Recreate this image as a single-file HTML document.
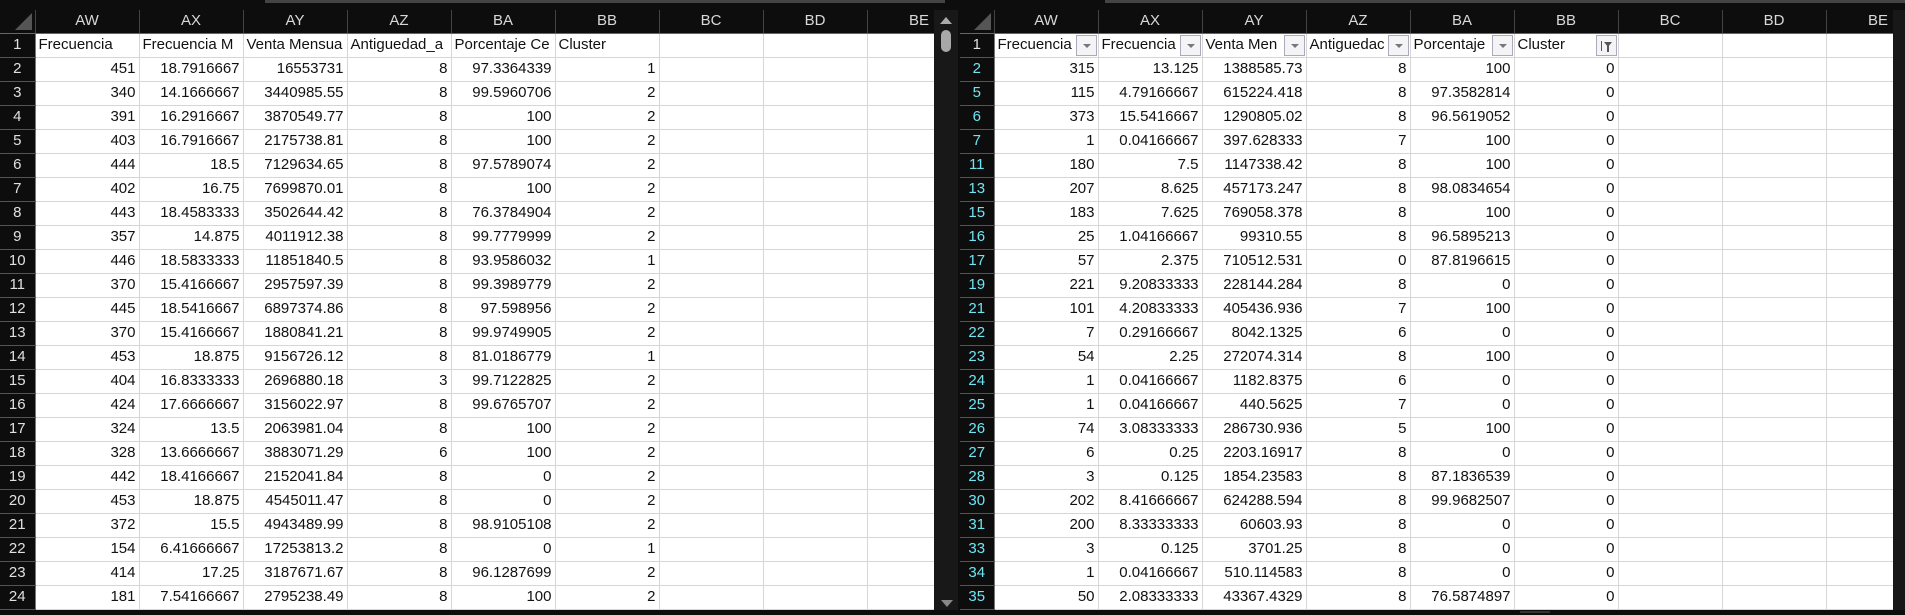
<!DOCTYPE html>
<html><head><meta charset="utf-8"><style>
*{margin:0;padding:0;box-sizing:border-box}
body{width:1905px;height:615px;background:#0d0d0d;overflow:hidden;position:relative;font-family:"Liberation Sans",sans-serif;font-size:15px}
.pane{position:absolute;top:10px;overflow:hidden;height:600px}
table{border-collapse:collapse;table-layout:fixed}
td{height:24px;border:1px solid #d6d6d6;background:#fff;color:#111;white-space:nowrap;overflow:hidden;padding:0 3px;text-align:right;line-height:22px}
td.t{text-align:left}
tr.h td{height:23px;background:#0d0d0d;color:#d8d8d8;text-align:center;border:none;border-right:1px solid #444;border-bottom:1px solid #666;font-size:15px}
td.r{background:#0d0d0d;color:#e0e0e0;text-align:center;border:none;border-bottom:1px solid #555;border-right:1px solid #777}
.f td.r{color:#6fe4f2}
td.corner{background:#0d0d0d;border:none;border-right:1px solid #777;border-bottom:1px solid #777;position:relative}
td.corner:after{content:"";position:absolute;right:3px;bottom:3px;border-left:17px solid transparent;border-bottom:17px solid #555}
.fb{position:relative;padding-right:26px}
.fb i{position:absolute;right:1px;top:1px;width:21px;height:21px;border:1px solid #aab;background:#f4f4f6}
.fb i:after{content:"";position:absolute;left:6px;top:8px;border-left:4px solid transparent;border-right:4px solid transparent;border-top:4px solid #777}
.fb i.fl:after{left:7px;top:6px;border-left:4px solid transparent;border-right:4px solid transparent;border-top:5px solid #555}
.fb i.fl:before{content:"";position:absolute;left:10px;top:10px;width:2px;height:6px;background:#555}
.fb i.fl b{position:absolute;left:4px;top:5px;width:1px;height:10px;background:#555}
.sb{position:absolute;background:#181818}
</style></head><body>
<div style="position:absolute;left:265px;top:0;width:680px;height:3px;background:#444"></div>
<div style="position:absolute;left:1105px;top:0;width:800px;height:3px;background:#444"></div>

<div class="pane" style="left:0;width:934px">
<table style="width:971px">
<colgroup><col style="width:35px"><col style="width:104px"><col style="width:104px"><col style="width:104px"><col style="width:104px"><col style="width:104px"><col style="width:104px"><col style="width:104px"><col style="width:104px"><col style="width:104px"></colgroup>
<tr class="h"><td class="corner"></td><td>AW</td><td>AX</td><td>AY</td><td>AZ</td><td>BA</td><td>BB</td><td>BC</td><td>BD</td><td>BE</td></tr>
<tr><td class="r">1</td><td class="t">Frecuencia</td><td class="t">Frecuencia M</td><td class="t">Venta Mensua</td><td class="t">Antiguedad_a</td><td class="t">Porcentaje Ce</td><td class="t">Cluster</td><td></td><td></td><td></td></tr>
<tr><td class="r">2</td><td>451</td><td>18.7916667</td><td>16553731</td><td>8</td><td>97.3364339</td><td>1</td><td></td><td></td><td></td></tr>
<tr><td class="r">3</td><td>340</td><td>14.1666667</td><td>3440985.55</td><td>8</td><td>99.5960706</td><td>2</td><td></td><td></td><td></td></tr>
<tr><td class="r">4</td><td>391</td><td>16.2916667</td><td>3870549.77</td><td>8</td><td>100</td><td>2</td><td></td><td></td><td></td></tr>
<tr><td class="r">5</td><td>403</td><td>16.7916667</td><td>2175738.81</td><td>8</td><td>100</td><td>2</td><td></td><td></td><td></td></tr>
<tr><td class="r">6</td><td>444</td><td>18.5</td><td>7129634.65</td><td>8</td><td>97.5789074</td><td>2</td><td></td><td></td><td></td></tr>
<tr><td class="r">7</td><td>402</td><td>16.75</td><td>7699870.01</td><td>8</td><td>100</td><td>2</td><td></td><td></td><td></td></tr>
<tr><td class="r">8</td><td>443</td><td>18.4583333</td><td>3502644.42</td><td>8</td><td>76.3784904</td><td>2</td><td></td><td></td><td></td></tr>
<tr><td class="r">9</td><td>357</td><td>14.875</td><td>4011912.38</td><td>8</td><td>99.7779999</td><td>2</td><td></td><td></td><td></td></tr>
<tr><td class="r">10</td><td>446</td><td>18.5833333</td><td>11851840.5</td><td>8</td><td>93.9586032</td><td>1</td><td></td><td></td><td></td></tr>
<tr><td class="r">11</td><td>370</td><td>15.4166667</td><td>2957597.39</td><td>8</td><td>99.3989779</td><td>2</td><td></td><td></td><td></td></tr>
<tr><td class="r">12</td><td>445</td><td>18.5416667</td><td>6897374.86</td><td>8</td><td>97.598956</td><td>2</td><td></td><td></td><td></td></tr>
<tr><td class="r">13</td><td>370</td><td>15.4166667</td><td>1880841.21</td><td>8</td><td>99.9749905</td><td>2</td><td></td><td></td><td></td></tr>
<tr><td class="r">14</td><td>453</td><td>18.875</td><td>9156726.12</td><td>8</td><td>81.0186779</td><td>1</td><td></td><td></td><td></td></tr>
<tr><td class="r">15</td><td>404</td><td>16.8333333</td><td>2696880.18</td><td>3</td><td>99.7122825</td><td>2</td><td></td><td></td><td></td></tr>
<tr><td class="r">16</td><td>424</td><td>17.6666667</td><td>3156022.97</td><td>8</td><td>99.6765707</td><td>2</td><td></td><td></td><td></td></tr>
<tr><td class="r">17</td><td>324</td><td>13.5</td><td>2063981.04</td><td>8</td><td>100</td><td>2</td><td></td><td></td><td></td></tr>
<tr><td class="r">18</td><td>328</td><td>13.6666667</td><td>3883071.29</td><td>6</td><td>100</td><td>2</td><td></td><td></td><td></td></tr>
<tr><td class="r">19</td><td>442</td><td>18.4166667</td><td>2152041.84</td><td>8</td><td>0</td><td>2</td><td></td><td></td><td></td></tr>
<tr><td class="r">20</td><td>453</td><td>18.875</td><td>4545011.47</td><td>8</td><td>0</td><td>2</td><td></td><td></td><td></td></tr>
<tr><td class="r">21</td><td>372</td><td>15.5</td><td>4943489.99</td><td>8</td><td>98.9105108</td><td>2</td><td></td><td></td><td></td></tr>
<tr><td class="r">22</td><td>154</td><td>6.41666667</td><td>17253813.2</td><td>8</td><td>0</td><td>1</td><td></td><td></td><td></td></tr>
<tr><td class="r">23</td><td>414</td><td>17.25</td><td>3187671.67</td><td>8</td><td>96.1287699</td><td>2</td><td></td><td></td><td></td></tr>
<tr><td class="r">24</td><td>181</td><td>7.54166667</td><td>2795238.49</td><td>8</td><td>100</td><td>2</td><td></td><td></td><td></td></tr>
</table></div>

<div class="sb" style="left:934px;top:10px;width:24px;height:600px"></div>
<div style="position:absolute;left:940px;top:17px;border-left:6px solid transparent;border-right:6px solid transparent;border-bottom:7px solid #aaa"></div>
<div style="position:absolute;left:941px;top:30px;width:10px;height:22px;border-radius:5px;background:#a8a8a8"></div>
<div style="position:absolute;left:941px;top:600px;border-left:6px solid transparent;border-right:6px solid transparent;border-top:7px solid #888"></div>

<div class="pane f" style="left:960px;width:933px">
<table style="width:970px">
<colgroup><col style="width:34px"><col style="width:104px"><col style="width:104px"><col style="width:104px"><col style="width:104px"><col style="width:104px"><col style="width:104px"><col style="width:104px"><col style="width:104px"><col style="width:104px"></colgroup>
<tr class="h"><td class="corner"></td><td>AW</td><td>AX</td><td>AY</td><td>AZ</td><td>BA</td><td>BB</td><td>BC</td><td>BD</td><td>BE</td></tr>
<tr><td class="r" style="color:#e0e0e0">1</td><td class="t fb">Frecuencia<i></i></td><td class="t fb">Frecuencia<i></i></td><td class="t fb">Venta Men<i></i></td><td class="t fb">Antiguedac<i></i></td><td class="t fb">Porcentaje<i></i></td><td class="t fb">Cluster<i class="fl"><b></b></i></td><td></td><td></td><td></td></tr>
<tr><td class="r">2</td><td>315</td><td>13.125</td><td>1388585.73</td><td>8</td><td>100</td><td>0</td><td></td><td></td><td></td></tr>
<tr><td class="r">5</td><td>115</td><td>4.79166667</td><td>615224.418</td><td>8</td><td>97.3582814</td><td>0</td><td></td><td></td><td></td></tr>
<tr><td class="r">6</td><td>373</td><td>15.5416667</td><td>1290805.02</td><td>8</td><td>96.5619052</td><td>0</td><td></td><td></td><td></td></tr>
<tr><td class="r">7</td><td>1</td><td>0.04166667</td><td>397.628333</td><td>7</td><td>100</td><td>0</td><td></td><td></td><td></td></tr>
<tr><td class="r">11</td><td>180</td><td>7.5</td><td>1147338.42</td><td>8</td><td>100</td><td>0</td><td></td><td></td><td></td></tr>
<tr><td class="r">13</td><td>207</td><td>8.625</td><td>457173.247</td><td>8</td><td>98.0834654</td><td>0</td><td></td><td></td><td></td></tr>
<tr><td class="r">15</td><td>183</td><td>7.625</td><td>769058.378</td><td>8</td><td>100</td><td>0</td><td></td><td></td><td></td></tr>
<tr><td class="r">16</td><td>25</td><td>1.04166667</td><td>99310.55</td><td>8</td><td>96.5895213</td><td>0</td><td></td><td></td><td></td></tr>
<tr><td class="r">17</td><td>57</td><td>2.375</td><td>710512.531</td><td>0</td><td>87.8196615</td><td>0</td><td></td><td></td><td></td></tr>
<tr><td class="r">19</td><td>221</td><td>9.20833333</td><td>228144.284</td><td>8</td><td>0</td><td>0</td><td></td><td></td><td></td></tr>
<tr><td class="r">21</td><td>101</td><td>4.20833333</td><td>405436.936</td><td>7</td><td>100</td><td>0</td><td></td><td></td><td></td></tr>
<tr><td class="r">22</td><td>7</td><td>0.29166667</td><td>8042.1325</td><td>6</td><td>0</td><td>0</td><td></td><td></td><td></td></tr>
<tr><td class="r">23</td><td>54</td><td>2.25</td><td>272074.314</td><td>8</td><td>100</td><td>0</td><td></td><td></td><td></td></tr>
<tr><td class="r">24</td><td>1</td><td>0.04166667</td><td>1182.8375</td><td>6</td><td>0</td><td>0</td><td></td><td></td><td></td></tr>
<tr><td class="r">25</td><td>1</td><td>0.04166667</td><td>440.5625</td><td>7</td><td>0</td><td>0</td><td></td><td></td><td></td></tr>
<tr><td class="r">26</td><td>74</td><td>3.08333333</td><td>286730.936</td><td>5</td><td>100</td><td>0</td><td></td><td></td><td></td></tr>
<tr><td class="r">27</td><td>6</td><td>0.25</td><td>2203.16917</td><td>8</td><td>0</td><td>0</td><td></td><td></td><td></td></tr>
<tr><td class="r">28</td><td>3</td><td>0.125</td><td>1854.23583</td><td>8</td><td>87.1836539</td><td>0</td><td></td><td></td><td></td></tr>
<tr><td class="r">30</td><td>202</td><td>8.41666667</td><td>624288.594</td><td>8</td><td>99.9682507</td><td>0</td><td></td><td></td><td></td></tr>
<tr><td class="r">31</td><td>200</td><td>8.33333333</td><td>60603.93</td><td>8</td><td>0</td><td>0</td><td></td><td></td><td></td></tr>
<tr><td class="r">33</td><td>3</td><td>0.125</td><td>3701.25</td><td>8</td><td>0</td><td>0</td><td></td><td></td><td></td></tr>
<tr><td class="r">34</td><td>1</td><td>0.04166667</td><td>510.114583</td><td>8</td><td>0</td><td>0</td><td></td><td></td><td></td></tr>
<tr><td class="r">35</td><td>50</td><td>2.08333333</td><td>43367.4329</td><td>8</td><td>76.5874897</td><td>0</td><td></td><td></td><td></td></tr>
</table></div>
<div class="sb" style="left:1893px;top:10px;width:12px;height:600px"></div>
<div style="position:absolute;left:1520px;top:611px;width:30px;height:2px;background:#333"></div>
</body></html>
